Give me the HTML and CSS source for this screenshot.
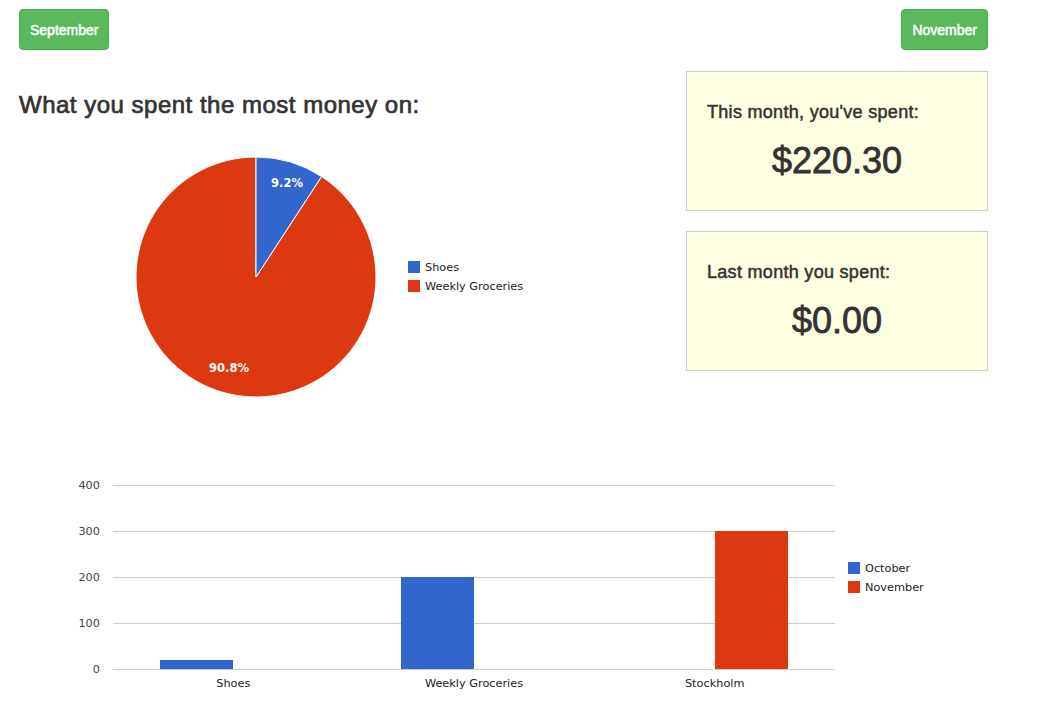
FILE: index.html
```html
<!DOCTYPE html>
<html>
<head>
<meta charset="utf-8">
<link rel="stylesheet" href="styles.css">
</head>
<body>
<div class="page">
  <div class="topbar">
    <button class="btn">September</button>
    <button class="btn">November</button>
  </div>
  <div class="main">
    <div class="left">
      <h3 class="title">What you spent the most money on:</h3>
      <svg class="pie" width="620" height="290" viewBox="0 0 620 290">
        <path d="M237,157 L302.57,56.5 A120,120 0 1 1 237,37 Z" fill="#dc3912" stroke="#fff" stroke-width="1"/>
        <path d="M237,157 L237,37 A120,120 0 0 1 302.57,56.5 Z" fill="#3366cc" stroke="#fff" stroke-width="1"/>
        <text class="slice-label" x="268" y="63">9.2%</text>
        <text class="slice-label" x="210" y="248">90.8%</text>
        <rect x="389" y="141" width="12" height="12" fill="#3366cc"/>
        <text class="legend" x="406" y="147">Shoes</text>
        <rect x="389" y="160" width="12" height="12" fill="#dc3912"/>
        <text class="legend" x="406" y="166">Weekly Groceries</text>
      </svg>
    </div>
    <div class="right">
      <div class="card">
        <h4 class="card-title">This month, you've spent:</h4>
        <div class="card-amount">$220.30</div>
      </div>
      <div class="card">
        <h4 class="card-title">Last month you spent:</h4>
        <div class="card-amount">$0.00</div>
      </div>
    </div>
  </div>
  <svg class="bars" width="969" height="230" viewBox="0 0 969 230">
    <g class="grid">
      <line x1="94" y1="15.5" x2="816" y2="15.5"/>
      <line x1="94" y1="61.5" x2="816" y2="61.5"/>
      <line x1="94" y1="107.5" x2="816" y2="107.5"/>
      <line x1="94" y1="153.5" x2="816" y2="153.5"/>
    </g>
    <text class="axis" x="81" y="15.5">400</text>
    <text class="axis" x="81" y="61.5">300</text>
    <text class="axis" x="81" y="107.5">200</text>
    <text class="axis" x="81" y="153.5">100</text>
    <text class="axis" x="81" y="199.5">0</text>
    <rect x="141" y="190" width="73" height="9" fill="#3366cc"/>
    <rect x="382" y="107" width="73" height="92" fill="#3366cc"/>
    <rect x="696" y="61" width="73" height="138" fill="#dc3912"/>
    <line class="baseline" x1="94" y1="199.5" x2="816" y2="199.5"/>
    <text class="cat" x="214.3" y="213">Shoes</text>
    <text class="cat" x="455" y="213">Weekly Groceries</text>
    <text class="cat" x="695.7" y="213">Stockholm</text>
    <rect x="829" y="92" width="12" height="12" fill="#3366cc"/>
    <text class="legend" x="846" y="98">October</text>
    <rect x="829" y="111" width="12" height="12" fill="#dc3912"/>
    <text class="legend" x="846" y="117">November</text>
  </svg>
</div>
</body>
</html>
```

FILE: styles.css
```css
* { box-sizing: border-box; }
html, body { margin: 0; padding: 0; background: #fff; }
body {
  font-family: "Liberation Sans", Arial, sans-serif;
  color: #333;
}
.page {
  padding: 9px 62px 0 19px;
}
.topbar {
  display: flex;
  justify-content: space-between;
  align-items: flex-start;
}
.btn {
  height: 41px;
  padding: 0 10px;
  background: #5cb85c;
  border: 1px solid #4cae4c;
  border-radius: 4px;
  color: #fff;
  font-family: "Liberation Sans", Arial, sans-serif;
  font-size: 14px;
  -webkit-text-stroke: 0.5px #fff;
  cursor: pointer;
}
.main {
  display: flex;
  align-items: flex-start;
}
.left {
  flex: 1;
}
.title {
  margin: 42px 0 0 0;
  font-size: 24px;
  line-height: 26.4px;
  font-weight: normal;
  letter-spacing: 0.5px;
  color: #333;
  -webkit-text-stroke: 0.7px #333;
}
.pie {
  display: block;
  margin-top: 2px;
}
.slice-label {
  font-family: "DejaVu Sans", sans-serif;
  font-size: 11.5px;
  font-weight: bold;
  fill: #fff;
  text-anchor: middle;
  dominant-baseline: central;
}
.legend {
  font-family: "DejaVu Sans", sans-serif;
  font-size: 11.3px;
  fill: #222;
  dominant-baseline: central;
}
.right {
  width: 302px;
  margin-top: 21px;
  display: flex;
  flex-direction: column;
  gap: 20px;
}
.card {
  height: 140px;
  border: 1px solid #ccc;
  background: #ffffe3;
  padding: 30px 20px 0 20px;
}
.card-title {
  margin: 0;
  font-size: 18px;
  line-height: 20px;
  font-weight: normal;
  letter-spacing: 0.3px;
  color: #333;
  -webkit-text-stroke: 0.5px #333;
}
.card-amount {
  margin-top: 19px;
  font-size: 36px;
  line-height: 40px;
  text-align: center;
  color: #333;
  -webkit-text-stroke: 0.8px #333;
}
.bars {
  display: block;
  margin-top: 60px;
}
.grid line, .baseline {
  stroke: #ccc;
  stroke-width: 1;
}
.axis {
  font-family: "DejaVu Sans", sans-serif;
  font-size: 11.3px;
  fill: #444;
  text-anchor: end;
  dominant-baseline: central;
}
.cat {
  font-family: "DejaVu Sans", sans-serif;
  font-size: 11.3px;
  fill: #222;
  text-anchor: middle;
  dominant-baseline: central;
}
```
